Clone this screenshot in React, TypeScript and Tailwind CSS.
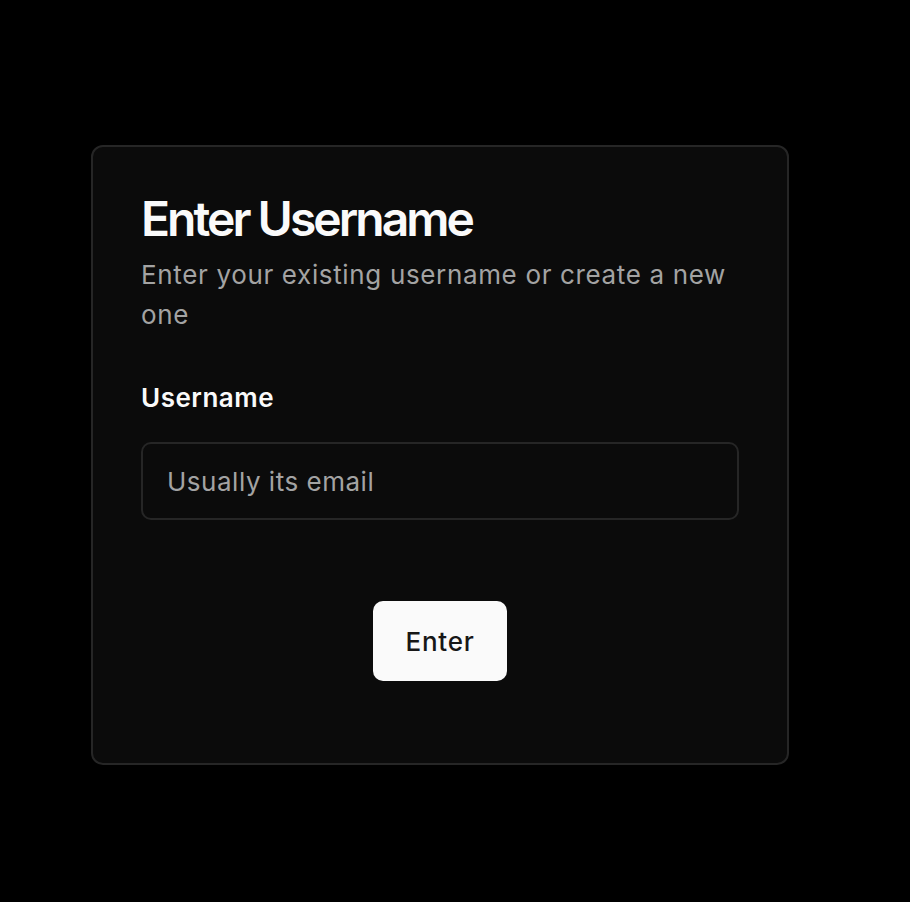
export default function App() {
  return (
    <div className="min-h-[902px] w-full bg-black pt-[145px] pl-[91px] font-['Inter','Noto_Sans',sans-serif]">
      <div className="w-[698px] rounded-[12px] border-2 border-[#262626] bg-[#0b0b0b] px-[48px] pt-[48px] pb-[82px]">
        {/* Header */}
        <h1 className="text-[48px] font-semibold leading-none tracking-[-0.062em] text-[#fafafa]">
          Enter Username
        </h1>
        <p className="mt-[12px] text-[26px] leading-[40px] tracking-[0.025em] text-[#a3a3a3]">
          Enter your existing username or create a new one
        </p>

        {/* Field */}
        <label className="mt-[45px] block text-[26px] font-semibold leading-[36px] tracking-[0.02em] text-[#fafafa]">
          Username
        </label>
        <input
          placeholder="Usually its email"
          className="mt-[26px] block h-[78px] w-full rounded-[10px] border-2 border-[#262626] bg-transparent px-[24px] text-[26px] tracking-[0.02em] text-[#fafafa] outline-none placeholder:text-[#a3a3a3]"
        />

        {/* Action */}
        <div className="mt-[81px] flex justify-center">
          <button className="h-[80px] w-[134px] rounded-[10px] bg-[#fafafa] text-[26px] font-medium tracking-[0.03em] text-[#171717]">
            Enter
          </button>
        </div>
      </div>
    </div>
  )
}
